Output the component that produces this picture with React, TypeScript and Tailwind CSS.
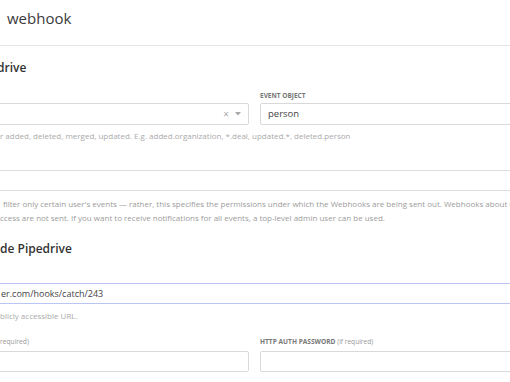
import React from "react";

export default function App() {
  return (
    <div
      className="w-[510px] h-[382px] overflow-hidden bg-white text-[#333]"
      style={{ fontFamily: '"Open Sans", "Noto Sans", sans-serif' }}
    >
      <header className="h-[46px] border-b border-[#e4e4e4] pt-[6px] pl-[7px]">
        <h1 className="text-[15px] leading-[24px] text-[#3a3a3a] whitespace-nowrap">webhook</h1>
      </header>

      <h2 className="mt-[14px] text-[12px] leading-[16px] font-semibold text-[#333] whitespace-nowrap -ml-[3px]">drive</h2>

      <div className="mt-[15px] flex gap-[11px]">
        <div className="w-[249px] flex flex-col">
          <div className="h-[10px] mb-[2px]" />
          <div className="-ml-[4px] w-[253px] h-[22px] border border-[#d9d9d9] rounded-[2px] flex items-center justify-end pr-[7px] gap-[6px] text-[#a8a8a8]">
            <span className="text-[10px] leading-none">×</span>
            <svg width="6" height="4" viewBox="0 0 6 4"><path d="M0 0 L6 0 L3 3.5 Z" fill="#a8a8a8" /></svg>
          </div>
        </div>
        <div className="w-[260px] flex flex-col">
          <div className="h-[10px] leading-[10px] mb-[2px] text-[6.5px] font-bold uppercase text-[#777] whitespace-nowrap">Event object</div>
          <div className="w-[260px] h-[22px] border border-[#d9d9d9] rounded-[2px] flex items-center pl-[7px] text-[9.5px] text-[#444]">person</div>
        </div>
      </div>

      <p className="mt-[5px] text-[8px] leading-[12px] text-[#aaa] whitespace-nowrap">r added, deleted, merged, updated. E.g. added.organization, *.deal, updated.*, deleted.person</p>

      <div className="mt-[28px] -ml-[5px] w-[520px] h-[21px] border border-[#dedede]" />

      <div className="mt-[6px] text-[8px] leading-[13.5px] text-[#9c9c9c] whitespace-nowrap">
        <div className="pl-[3px]">filter only certain user's events — rather, this specifies the permissions under which the Webhooks are being sent out. Webhooks about objects</div>
        <div>ccess are not sent. If you want to receive notifications for all events, a top-level admin user can be used.</div>
      </div>

      <h2 className="mt-[17px] text-[12px] leading-[16px] font-semibold text-[#333] whitespace-nowrap">de Pipedrive</h2>

      <div className="mt-[26px] -ml-[5px] w-[520px] h-[21px] border border-[#b9c6f3] flex items-center pl-[5px] text-[9px] text-[#444] whitespace-nowrap">
        er.com/hooks/catch/243
      </div>

      <p className="mt-[6px] text-[8px] leading-[12px] text-[#aaa] whitespace-nowrap">blicly accessible URL.</p>

      <div className="mt-[15px] flex gap-[11px]">
        <div className="w-[249px] flex flex-col">
          <div className="h-[10px] leading-[10px] mb-[4px] text-[6.7px] text-[#999] whitespace-nowrap">required)</div>
          <div className="-ml-[4px] w-[253px] h-[21px] border border-[#d9d9d9] rounded-[2px]" />
        </div>
        <div className="w-[260px] flex flex-col">
          <div className="h-[10px] leading-[10px] mb-[4px] text-[6.6px] whitespace-nowrap">
            <span className="font-bold uppercase text-[#777]">HTTP auth password</span>
            <span className="text-[#999]"> (if required)</span>
          </div>
          <div className="w-[260px] h-[21px] border border-[#d9d9d9] rounded-[2px]" />
        </div>
      </div>
    </div>
  );
}
